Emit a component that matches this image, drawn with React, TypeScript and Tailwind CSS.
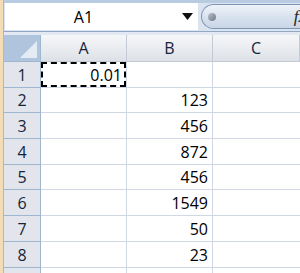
const rows: { n: number; a?: string; b?: string; h: string }[] = [
  { n: 1, a: "0.01", h: "h-[26px]" },
  { n: 2, b: "123", h: "h-[25px]" },
  { n: 3, b: "456", h: "h-[26px]" },
  { n: 4, b: "872", h: "h-[26px]" },
  { n: 5, b: "456", h: "h-[25px]" },
  { n: 6, b: "1549", h: "h-[26px]" },
  { n: 7, b: "50", h: "h-[26px]" },
  { n: 8, b: "23", h: "h-[26px]" },
  { n: 9, h: "h-[26px]" },
];

const font = { fontFamily: '"Open Sans", "Noto Sans", sans-serif' };

export default function App() {
  return (
    <div
      className="flex w-[300px] h-[273px] overflow-hidden bg-white text-black"
      style={font}
    >
      {/* window edge */}
      <div className="w-[4px] shrink-0 bg-[#f4ddb6] border-r border-[#c9b48e]" />

      <div className="flex flex-col flex-1 min-w-0 bg-[#dfe7f1]">
        {/* NAME BOX + FORMULA BAR */}
        <div className="h-[31px] shrink-0 flex items-start border-t-[3px] border-[#b9cbe0] bg-[#dae4f0]">
          <div className="ml-px mt-0 w-[193px] h-[27px] bg-white flex items-center relative">
            <span className="flex-1 text-center text-[16px] pr-[20px] leading-none">
              A1
            </span>
            <svg
              width="11"
              height="7"
              viewBox="0 0 11 7"
              className="mr-[5px]"
            >
              <path d="M0 0h11L5.5 7z" fill="#111" />
            </svg>
          </div>
          <div className="ml-[3px] mt-px h-[25px] flex-1 flex items-center rounded-l-full border border-r-0 border-[#7f95b3] bg-gradient-to-b from-[#eef3f9] via-[#d9e3ef] to-[#c9d6e6]">
            <div className="ml-[6px] w-[8px] h-[8px] rounded-full bg-gradient-to-br from-[#b8c0ca] to-[#6f7a88]" />
            <span
              className="ml-auto mr-[-6px] text-[17px] italic leading-none text-[#222]"
              style={{ fontFamily: '"Liberation Serif", serif' }}
            >
              fx
            </span>
          </div>
        </div>

        <div className="h-[4px] shrink-0 border-t border-[#91a7c3] bg-[#e2e9f2]" />

        {/* GRID */}
        <div className="grid grid-cols-[37px_86px_86px_1fr] bg-white">
          {/* header row */}
          <div className="h-[27px] relative bg-[#b0c4de] border-r border-b border-[#9eb6ce] overflow-hidden">
            <svg width="36" height="26" className="absolute inset-0">
              <path d="M33 6 L33 23 L16 23 Z" fill="#e3ebf4" />
            </svg>
          </div>
          {["A", "B", "C"].map((c) => (
            <div
              key={c}
              className="h-[27px] flex items-center justify-center text-[16px] text-[#15243a] bg-gradient-to-b from-[#f6f7f9] to-[#dde1e6] border-r border-b border-[#c3cad4]"
            >
              {c}
            </div>
          ))}

          {rows.map((r) => (
            <div key={r.n} className="contents">
              <div
                className={`${r.h} flex items-center justify-center text-[16px] text-[#15243a] bg-[#e2e6ec] border-r border-b border-[#9eb6ce]`}
              >
                {r.n}
              </div>
              <div
                className={`${r.h} flex items-center justify-end border-r border-b border-[#d0d7e5]`}
              >
                {r.a ? (
                  <div className="w-full h-full flex items-center justify-end pr-[2px] border-2 border-dashed border-black text-[16px]">
                    {r.a}
                  </div>
                ) : null}
              </div>
              <div
                className={`${r.h} flex items-center justify-end pr-[4px] text-[16px] border-r border-b border-[#d0d7e5]`}
              >
                {r.b}
              </div>
              <div className={`${r.h} border-b border-[#d0d7e5]`} />
            </div>
          ))}
        </div>
      </div>
    </div>
  );
}
